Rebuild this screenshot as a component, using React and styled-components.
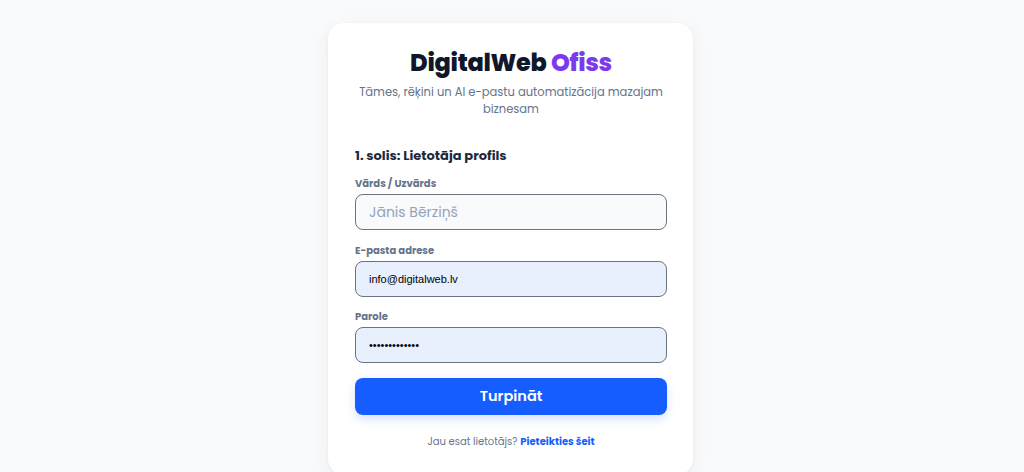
import React, { useState } from "react";
import styled, { createGlobalStyle } from "styled-components";

const Global = createGlobalStyle`
  html, body { margin: 0; padding: 0; background: #f8fafc; }
  body { font-family: Poppins, Inter, "Noto Sans", sans-serif; -webkit-font-smoothing: antialiased; }
  * { box-sizing: border-box; }
`;

const Page = styled.div`
  min-height: 472px;
  display: flex;
  justify-content: center;
  align-items: flex-start;
  padding: 23px 3px 0 0;
`;

const Card = styled.div`
  width: 365px;
  background: #ffffff;
  border-radius: 16px;
  box-shadow: 0 4px 18px rgba(15, 23, 42, 0.06), 0 1px 3px rgba(15, 23, 42, 0.04);
  padding: 25px 26px 26px 27px;
  display: flex;
  flex-direction: column;
`;

const Brand = styled.h1`
  margin: 0;
  text-align: center;
  font-size: 24px;
  font-weight: 800;
  line-height: 30px;
  color: #0f172a;
  letter-spacing: -0.3px;
`;

const Accent = styled.span`
  color: #7c3aed;
`;

const Subtitle = styled.p`
  margin: 6px 0 0;
  text-align: center;
  font-size: 11.5px;
  line-height: 17px;
  color: #64748b;
`;

const StepTitle = styled.h2`
  margin: 28px 0 0;
  font-size: 13px;
  font-weight: 700;
  line-height: 20px;
  color: #1e293b;
`;

const Field = styled.div`
  display: flex;
  flex-direction: column;
  margin-top: ${(p) => p.$top}px;
`;

const Label = styled.label`
  font-size: 10px;
  font-weight: 700;
  line-height: 14px;
  color: #64748b;
  margin-bottom: 3px;
`;

const Input = styled.input`
  height: 36px;
  width: 100%;
  border: 1px solid #6b7280;
  border-radius: 8px;
  padding: 0 13px;
  font-family: ${(p) => (p.$filled ? '"Liberation Sans", Arial, sans-serif' : 'Poppins, Inter, "Noto Sans", sans-serif')};
  font-size: ${(p) => (p.$filled ? "11px" : "14px")};
  color: #000;
  background: ${(p) => (p.$filled ? "#e8f0fe" : "#f8fafc")};
  outline: none;
  &::placeholder { color: #94a3b8; }
`;

const Button = styled.button`
  margin-top: 15px;
  height: 37px;
  border: none;
  border-radius: 8px;
  background: #165dff;
  color: #fff;
  font-family: Poppins, Inter, "Noto Sans", sans-serif;
  font-size: 14.5px;
  font-weight: 600;
  box-shadow: 0 4px 10px rgba(22, 93, 255, 0.18);
  cursor: pointer;
`;

const Footer = styled.p`
  margin: 20px 0 0;
  text-align: center;
  font-size: 10px;
  line-height: 14px;
  color: #64748b;
`;

const Link = styled.a`
  color: #165dff;
  font-weight: 700;
  text-decoration: none;
`;

export default function App() {
  const [name, setName] = useState("");
  return (
    <>
      <Global />
      <Page>
        <Card>
          <Brand>
            DigitalWeb <Accent>Ofiss</Accent>
          </Brand>
          <Subtitle>Tāmes, rēķini un AI e-pastu automatizācija mazajam biznesam</Subtitle>
          <StepTitle>1. solis: Lietotāja profils</StepTitle>
          <Field $top={11}>
            <Label>Vārds / Uzvārds</Label>
            <Input placeholder="Jānis Bērziņš" value={name} onChange={(e) => setName(e.target.value)} />
          </Field>
          <Field $top={13.5}>
            <Label>E-pasta adrese</Label>
            <Input $filled defaultValue="info@digitalweb.lv" />
          </Field>
          <Field $top={13.5}>
            <Label>Parole</Label>
            <Input $filled type="password" defaultValue="parole123456!" />
          </Field>
          <Button>Turpināt</Button>
          <Footer>
            Jau esat lietotājs? <Link href="#">Pieteikties šeit</Link>
          </Footer>
        </Card>
      </Page>
    </>
  );
}
